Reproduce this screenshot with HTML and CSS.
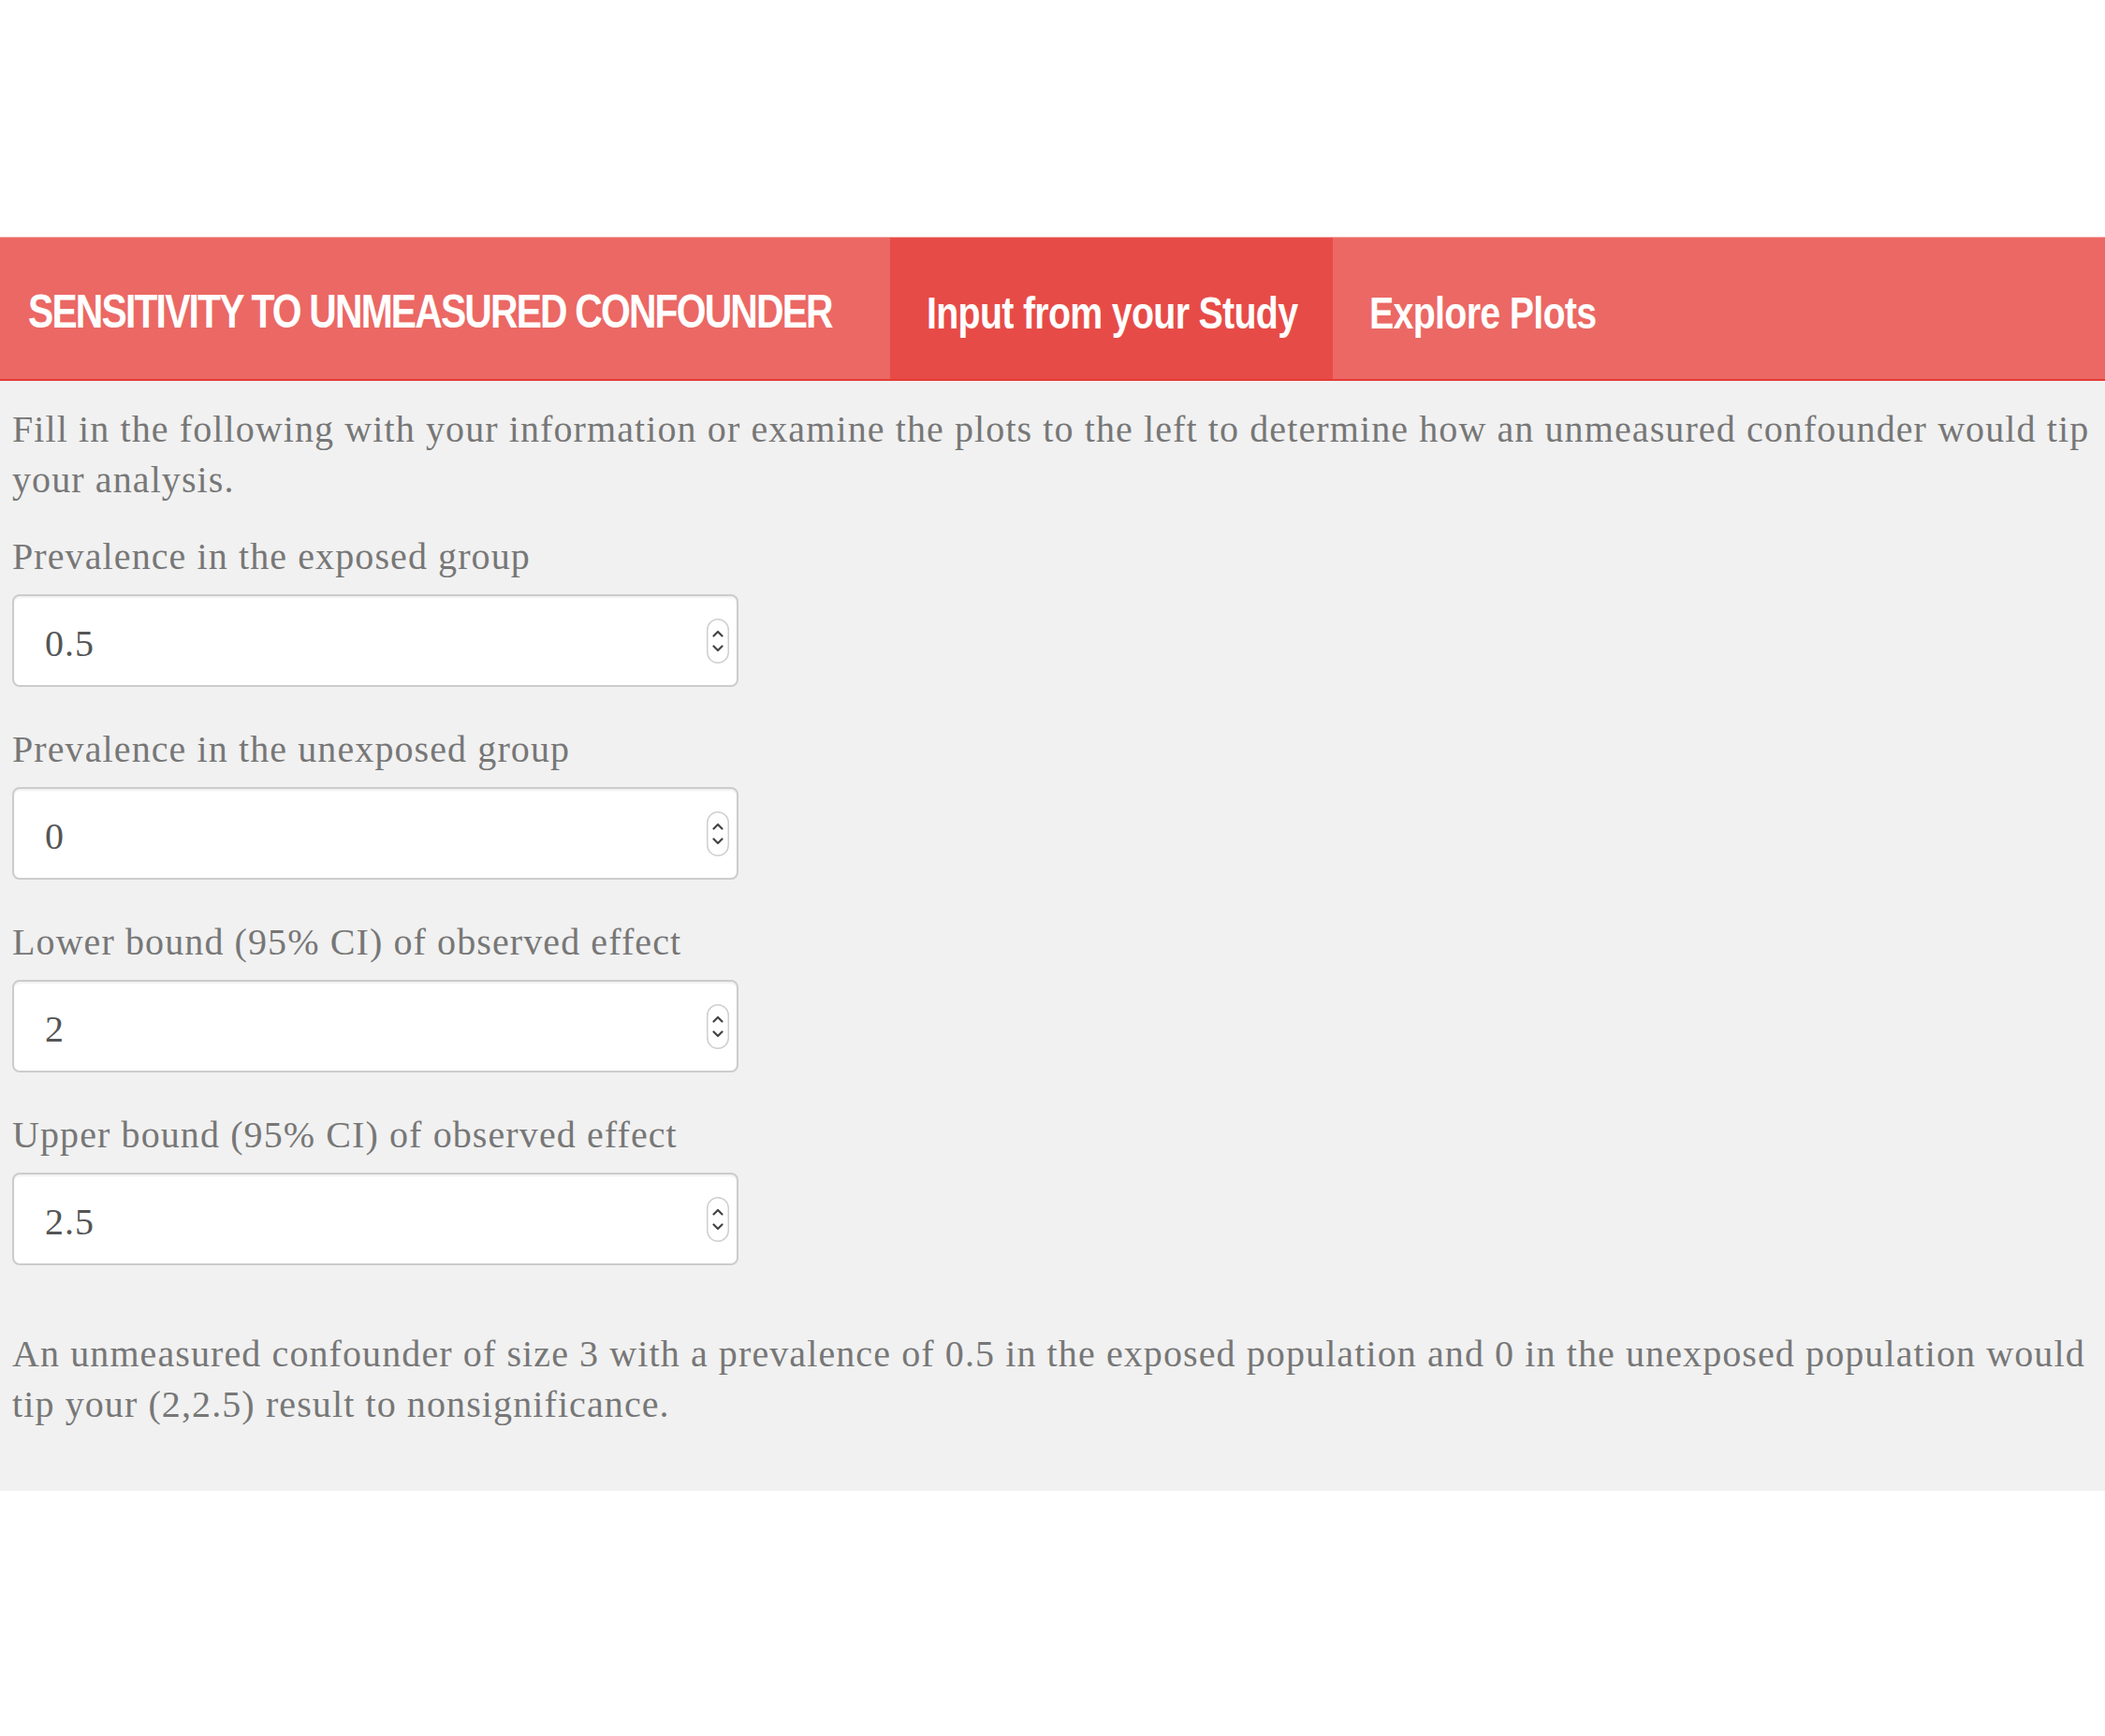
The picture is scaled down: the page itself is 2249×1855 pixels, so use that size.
FILE: index.html
```html
<!DOCTYPE html>
<html>
<head>
<meta charset="utf-8">
<title>Sensitivity to Unmeasured Confounder</title>
<link rel="stylesheet" href="styles.css">
</head>
<body>
<div class="top-space"></div>
<nav class="navbar">
  <div class="brand"><span class="brand-text">SENSITIVITY TO UNMEASURED CONFOUNDER</span></div>
  <ul class="tabs">
    <li class="tab active"><span class="tab-text">Input from your Study</span></li>
    <li class="tab"><span class="tab-text">Explore Plots</span></li>
  </ul>
</nav>
<main class="panel">
  <p class="intro">Fill in the following with your information or examine the plots to the left to determine how an unmeasured confounder would tip your analysis.</p>

  <div class="form-group">
    <label class="label">Prevalence in the exposed group</label>
    <div class="input">
      <span class="value">0.5</span>
      <svg class="spinner" width="24" height="48" viewBox="0 0 24 48"><rect x="0.75" y="0.75" width="22.5" height="46.5" rx="11.25" fill="#fff" stroke="#cfcfcf" stroke-width="1.5"/><path d="M7.5 18.5 L12 14 L16.5 18.5" fill="none" stroke="#444" stroke-width="2.2" stroke-linecap="round" stroke-linejoin="round"/><path d="M7.5 29.5 L12 34 L16.5 29.5" fill="none" stroke="#444" stroke-width="2.2" stroke-linecap="round" stroke-linejoin="round"/></svg>
    </div>
  </div>

  <div class="form-group">
    <label class="label">Prevalence in the unexposed group</label>
    <div class="input">
      <span class="value">0</span>
      <svg class="spinner" width="24" height="48" viewBox="0 0 24 48"><rect x="0.75" y="0.75" width="22.5" height="46.5" rx="11.25" fill="#fff" stroke="#cfcfcf" stroke-width="1.5"/><path d="M7.5 18.5 L12 14 L16.5 18.5" fill="none" stroke="#444" stroke-width="2.2" stroke-linecap="round" stroke-linejoin="round"/><path d="M7.5 29.5 L12 34 L16.5 29.5" fill="none" stroke="#444" stroke-width="2.2" stroke-linecap="round" stroke-linejoin="round"/></svg>
    </div>
  </div>

  <div class="form-group">
    <label class="label">Lower bound (95% CI) of observed effect</label>
    <div class="input">
      <span class="value">2</span>
      <svg class="spinner" width="24" height="48" viewBox="0 0 24 48"><rect x="0.75" y="0.75" width="22.5" height="46.5" rx="11.25" fill="#fff" stroke="#cfcfcf" stroke-width="1.5"/><path d="M7.5 18.5 L12 14 L16.5 18.5" fill="none" stroke="#444" stroke-width="2.2" stroke-linecap="round" stroke-linejoin="round"/><path d="M7.5 29.5 L12 34 L16.5 29.5" fill="none" stroke="#444" stroke-width="2.2" stroke-linecap="round" stroke-linejoin="round"/></svg>
    </div>
  </div>

  <div class="form-group">
    <label class="label">Upper bound (95% CI) of observed effect</label>
    <div class="input">
      <span class="value">2.5</span>
      <svg class="spinner" width="24" height="48" viewBox="0 0 24 48"><rect x="0.75" y="0.75" width="22.5" height="46.5" rx="11.25" fill="#fff" stroke="#cfcfcf" stroke-width="1.5"/><path d="M7.5 18.5 L12 14 L16.5 18.5" fill="none" stroke="#444" stroke-width="2.2" stroke-linecap="round" stroke-linejoin="round"/><path d="M7.5 29.5 L12 34 L16.5 29.5" fill="none" stroke="#444" stroke-width="2.2" stroke-linecap="round" stroke-linejoin="round"/></svg>
    </div>
  </div>

  <p class="result">An unmeasured confounder of size 3 with a prevalence of 0.5 in the exposed population and 0 in the unexposed population would tip your (2,2.5) result to nonsignificance.</p>
</main>
</body>
</html>
```

FILE: styles.css
```css
html, body {
  margin: 0;
  padding: 0;
  background: #ffffff;
}

body {
  font-family: "Liberation Serif", "Times New Roman", serif;
  color: #777777;
}

.top-space {
  height: 253px;
}

.navbar {
  display: flex;
  align-items: stretch;
  height: 151px;
  background: #eb6864;
  border-top: 1px solid #f3a5a2;
  border-bottom: 2px solid #e53c37;
  font-family: "Liberation Sans", Arial, sans-serif;
  font-weight: bold;
  color: #ffffff;
}

.brand {
  flex: 0 0 951px;
  min-width: 0;
  box-sizing: border-box;
  display: flex;
  align-items: center;
  padding: 6px 0 0 30px;
  font-size: 50px;
  letter-spacing: -2.2px;
  white-space: nowrap;
  overflow: visible;
}

.brand-text,
.tab-text {
  display: inline-block;
  flex: none;
  transform-origin: left center;
}

.brand-text {
  transform: scaleX(0.816);
}

.tab-text {
  transform: scaleX(0.818);
}

.tabs {
  display: flex;
  list-style: none;
  margin: 0;
  padding: 0;
}

.tab {
  display: flex;
  align-items: center;
  min-width: 0;
  box-sizing: border-box;
  padding: 9px 39px 0 39px;
  font-size: 48px;
  letter-spacing: -0.8px;
  white-space: nowrap;
}

.tab.active {
  flex: 0 0 473px;
  background: #e74b47;
}

.panel {
  background: #f1f1f1;
  padding: 25px 13px 65px 13px;
}

.intro,
.result,
.label {
  font-size: 40px;
  line-height: 54px;
  letter-spacing: 1.1px;
}

.intro {
  margin: 0 0 28px 0;
}

.form-group {
  margin-bottom: 40px;
}

.label {
  display: block;
  margin-bottom: 13px;
}

.input {
  display: flex;
  align-items: center;
  justify-content: space-between;
  box-sizing: border-box;
  width: 776px;
  height: 99px;
  padding: 0 8px 0 33px;
  background: #ffffff;
  border: 2px solid #cccccc;
  border-radius: 8px;
  box-shadow: inset 0 2px 2px rgba(0, 0, 0, 0.06);
  font-size: 40px;
  color: #555555;
}

.value {
  letter-spacing: 1px;
  padding-top: 6px;
}

.spinner {
  display: block;
}

.result {
  margin: 68px 0 0 0;
}
```
